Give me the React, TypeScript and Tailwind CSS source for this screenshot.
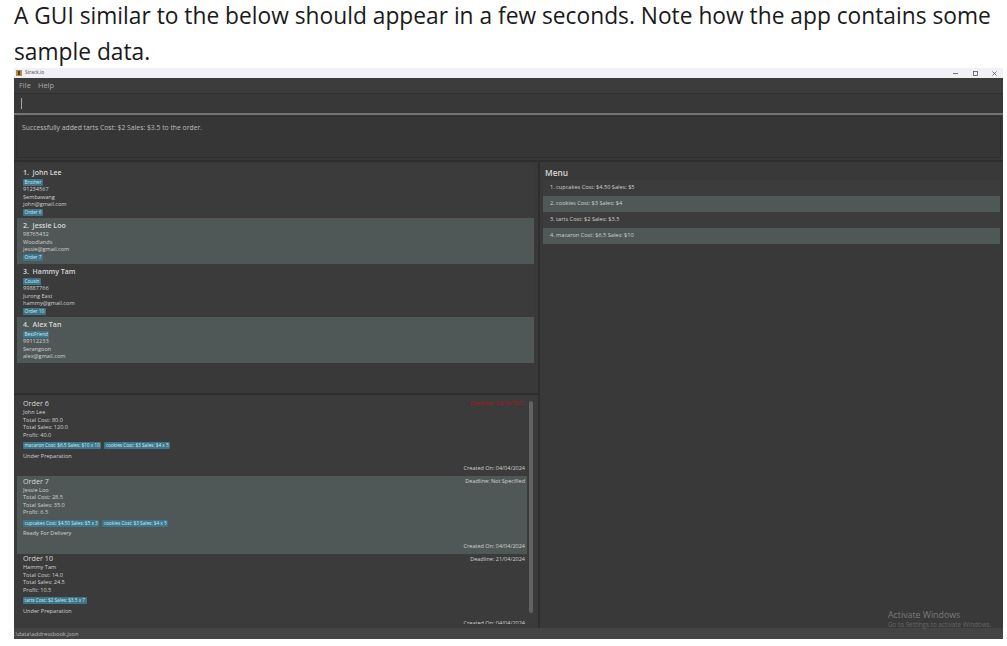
const persons = [
  { name: "John Lee", tag: "Brother", phone: "91234567", address: "Sembawang", email: "john@gmail.com", order: "Order 6" },
  { name: "Jessie Loo", phone: "98765432", address: "Woodlands", email: "jessie@gmail.com", order: "Order 7" },
  { name: "Hammy Tam", tag: "Cousin", phone: "99887766", address: "Jurong East", email: "hammy@gmail.com", order: "Order 10" },
  { name: "Alex Tan", tag: "BestFriend", phone: "99112233", address: "Serangoon", email: "alex@gmail.com" },
];

const orders = [
  {
    title: "Order 6", customer: "John Lee", cost: "80.0", sales: "120.0", profit: "40.0",
    items: ["macaron Cost: $6.5 Sales: $10 x 10", "cookies Cost: $3 Sales: $4 x 5"],
    status: "Under Preparation", deadline: "Deadline: 22/06/2001", late: true,
  },
  {
    title: "Order 7", customer: "Jessie Loo", cost: "28.5", sales: "35.0", profit: "6.5",
    items: ["cupcakes Cost: $4.50 Sales: $5 x 3", "cookies Cost: $3 Sales: $4 x 5"],
    status: "Ready For Delivery", deadline: "Deadline: Not Specified", late: false,
  },
  {
    title: "Order 10", customer: "Hammy Tam", cost: "14.0", sales: "24.5", profit: "10.5",
    items: ["tarts Cost: $2 Sales: $3.5 x 7"],
    status: "Under Preparation", deadline: "Deadline: 21/04/2024", late: false,
  },
];

const menu = [
  "1. cupcakes Cost: $4.50 Sales: $5",
  "2. cookies Cost: $3 Sales: $4",
  "3. tarts Cost: $2 Sales: $3.5",
  "4. macaron Cost: $6.5 Sales: $10",
];

function Chip({ children }: { children: string }) {
  return <span className="bg-[#3c768c] text-[#dbe6ea] text-[4.7px] leading-[7px] px-[1.5px] rounded-[1px] whitespace-nowrap">{children}</span>;
}

function PersonCard({ person, index }: { person: (typeof persons)[number]; index: number }) {
  return (
    <div className={`pl-[6px] pt-[3px] ${index % 2 ? "bg-[#505857] h-[46px]" : "bg-[#3b3b3b] h-[53px]"}`}>
      <div className="text-[7px] leading-[10px] font-semibold text-[#d8d8d8]">
        {index + 1}.&nbsp; {person.name}
      </div>
      {person.tag && <div className="flex h-[8px] items-center"><Chip>{person.tag}</Chip></div>}
      <div className="text-[5.6px] leading-[7.5px] text-[#d0d0d0]">{person.phone}</div>
      <div className="text-[5.6px] leading-[7.5px] text-[#d0d0d0]">{person.address}</div>
      <div className="text-[5.6px] leading-[7.5px] text-[#d0d0d0]">{person.email}</div>
      {person.order && <div className="flex h-[8px] items-center"><Chip>{person.order}</Chip></div>}
    </div>
  );
}

function OrderCard({ order, index }: { order: (typeof orders)[number]; index: number }) {
  return (
    <div className={`h-[77.6px] shrink-0 pl-[6px] pr-[2px] flex flex-col ${index % 2 ? "bg-[#505857]" : "bg-[#3b3b3b]"}`}>
      <div className="flex justify-between items-center h-[9px] mt-[0.5px]">
        <span className="text-[7.2px] font-medium text-[#d8d8d8]">{order.title}</span>
        <span className={`text-[5.5px] ${order.late ? "text-[#b5141c]" : "text-[#d0d0d0]"}`}>{order.deadline}</span>
      </div>
      <div className="text-[5.6px] leading-[7.5px] text-[#d0d0d0] mt-[1px]">
        <div>{order.customer}</div>
        <div>Total Cost: {order.cost}</div>
        <div>Total Sales: {order.sales}</div>
        <div>Profit: {order.profit}</div>
      </div>
      <div className="flex gap-[3px] mt-[2.5px] h-[8px] items-center">
        {order.items.map((item) => <Chip key={item}>{item}</Chip>)}
      </div>
      <div className="text-[5.6px] leading-[7.5px] text-[#d0d0d0] mt-[3px]">{order.status}</div>
      <div className="text-[5.5px] leading-[7.5px] text-[#d0d0d0] text-right mt-[5px]">Created On: 04/04/2024</div>
    </div>
  );
}

export default function App() {
  return (
    <div className="relative w-[1007px] h-[646px] bg-white overflow-hidden font-['Open_Sans',sans-serif]">
      <div className="pl-[14px] h-[68px] flex flex-col text-[22.75px] leading-[36px] text-[#1a1a1a]">
        <p className="whitespace-nowrap -mt-[2px]">A GUI similar to the below should appear in a few seconds. Note how the app contains some</p>
        <p>sample data.</p>
      </div>

      <div className="ml-[14px] w-[989px] h-[571px] flex flex-col bg-[#3a3a3a]">
        {/* title bar */}
        <div className="h-[10px] bg-[#f0f0f6] flex items-center pl-[2px]">
          <svg width="6" height="6" viewBox="0 0 6 6" className="mr-[3px]">
            <rect width="6" height="6" fill="#b08a50" />
            <rect x="2" y="1" width="2" height="4" fill="#5a4020" />
          </svg>
          <span className="text-[4.8px] text-[#444]">Strack.io</span>
          <div className="ml-auto flex items-center gap-[14.5px] pr-[6px]">
            <svg width="5" height="5" viewBox="0 0 5 5"><path d="M0 2.5H5" stroke="#555" strokeWidth="0.8" /></svg>
            <svg width="5" height="5" viewBox="0 0 5 5"><rect x="0.5" y="0.5" width="4" height="4" fill="none" stroke="#555" strokeWidth="0.8" /></svg>
            <svg width="5" height="5" viewBox="0 0 5 5"><path d="M0.5 0.5L4.5 4.5M4.5 0.5L0.5 4.5" stroke="#555" strokeWidth="0.8" /></svg>
          </div>
        </div>

        {/* menu bar */}
        <div className="h-[16px] bg-[#3c3c3c] border-b border-[#303030] flex items-center gap-[7px] pl-[5px] pt-[1px] text-[7.5px] text-[#a8a8a8]">
          <span>File</span>
          <span>Help</span>
        </div>

        {/* command box */}
        <div className="h-[21px] bg-[#383838] border-b-2 border-[#737373] flex items-center pl-[7px]">
          <div className="w-px h-[11px] bg-[#a8a8a8]" />
        </div>

        {/* result box */}
        <div className="h-[47px] bg-[#383838] border-b-2 border-[#2e2e2e] px-[2px] pt-px pb-[2px]">
          <div className="h-full bg-[#363636] border border-[#2f2f2f] pl-[5px] pt-[6px] text-[6.8px] leading-[10px] text-[#bdbdbd]">
            Successfully added tarts Cost: $2 Sales: $3.5 to the order.
          </div>
        </div>

        <div className="flex-1 min-h-0 flex">
          {/* left column */}
          <div className="w-[526px] flex flex-col border-r-2 border-[#2e2e2e] shrink-0">
            <div className="h-[233px] border-b-2 border-[#2e2e2e] px-[3px] pt-[3px] bg-[#393939]">
              <div className="w-[517px]">
                {persons.map((p, i) => <PersonCard key={p.name} person={p} index={i} />)}
              </div>
            </div>
            <div className="relative flex-1 min-h-0 overflow-hidden bg-[#3b3b3b] pl-[3px] pt-[3.5px]">
              <div className="w-[510px] h-[225.5px] overflow-hidden flex flex-col">
                {orders.map((o, i) => <OrderCard key={o.title} order={o} index={i} />)}
              </div>
              <div className="absolute left-[515px] top-[6px] w-[4px] h-[212px] rounded-[2px] bg-[#626262]" />
            </div>
          </div>

          {/* menu column */}
          <div className="flex-1 bg-[#393939] px-[3px] pt-[5px]">
            <div className="text-[8.3px] leading-[12px] font-semibold text-[#d8d8d8] pl-[2px] h-[13px]">Menu</div>
            {menu.map((m, i) => (
              <div key={m} className={`h-[16px] flex items-center pl-[7px] pb-[2px] text-[5.6px] text-[#d0d0d0] whitespace-pre ${i % 2 ? "bg-[#505857]" : "bg-[#3c3c3c]"}`}>
                {m}
              </div>
            ))}
          </div>
        </div>

        {/* status bar */}
        <div className="h-[11px] bg-[#444444] flex items-center pt-[2px] text-[5.7px] text-[#bcbcbc]">.\data\addressbook.json</div>
      </div>

      {/* activation watermark */}
      <div className="absolute left-[888px] top-[610px] text-[#7c7c7c]">
        <div className="text-[8.8px] leading-[10px]">Activate Windows</div>
        <div className="text-[6.3px] leading-[10px] whitespace-nowrap text-[#666]">Go to Settings to activate Windows.</div>
      </div>
    </div>
  );
}
